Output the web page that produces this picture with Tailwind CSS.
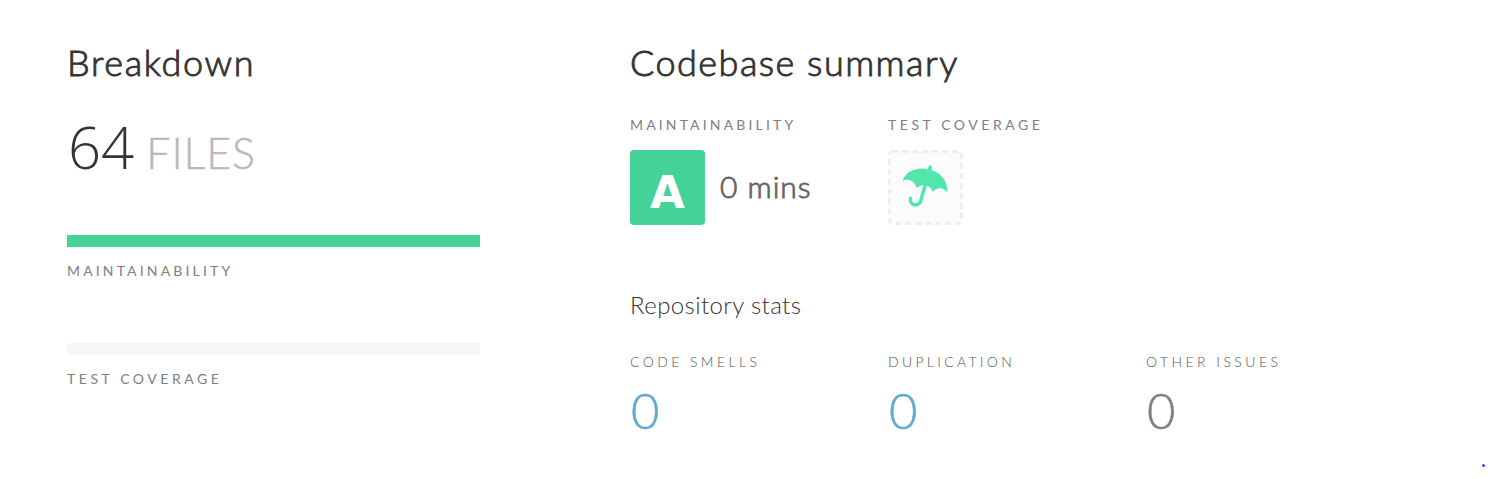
<!DOCTYPE html>
<html lang="en">
<head>
<meta charset="utf-8">
<title>Codebase summary</title>
<script src="https://cdn.jsdelivr.net/npm/@tailwindcss/browser@4"></script>
</head>
<body class="bg-white font-['Lato',sans-serif] text-[#333]">
<main class="relative flex h-[479px] w-[1488px] overflow-hidden pl-[67px] pt-[42px]">
  <section class="w-[413px]">
    <h2 class="h-10 whitespace-nowrap text-[36px] font-light leading-10 [-webkit-text-stroke:0.9px_#333]"><span class="tracking-[1.65px]">Breakdown</span></h2>
    <p class="mt-[35px] flex h-[60px] items-baseline whitespace-nowrap font-light leading-[60px]"><span class="pl-px font-['Open_Sans',sans-serif] text-[58px]">64</span><span class="ml-[12px] text-[43px] tracking-[0.9px] text-[#b8b8b8] [-webkit-text-stroke:0.4px_#b8b8b8]">FILES</span></p>
    <div class="mt-[58px] h-3 bg-[#45d298]"></div>
    <h3 class="mt-[14px] h-5 whitespace-nowrap text-[14px] leading-5 text-[#808080]"><span class="tracking-[3.15px]">MAINTAINABILITY</span></h3>
    <div class="mt-[62px] h-3 bg-[#f7f7f7]"></div>
    <h3 class="mt-[14px] h-5 whitespace-nowrap text-[14px] leading-5 text-[#808080]"><span class="tracking-[3.55px]">TEST COVERAGE</span></h3>
  </section>
  <section class="ml-[150px] w-[774px]">
    <h2 class="h-10 whitespace-nowrap text-[36px] font-light leading-10 [-webkit-text-stroke:0.9px_#333]"><span class="tracking-[1.48px]">Codebase summary</span></h2>
    <div class="mt-[33px] grid grid-cols-3">
      <div>
        <h3 class="h-5 whitespace-nowrap text-[14px] leading-5 text-[#808080]"><span class="tracking-[3.15px]">MAINTAINABILITY</span></h3>
        <div class="mt-[15px] flex h-[75px] items-center">
          <div class="flex h-[75px] w-[75px] items-center justify-center rounded-[4px] bg-[#45d298] pt-[10px] font-['DejaVu_Sans',sans-serif] text-[45px] font-bold leading-none text-white">A</div>
          <span class="ml-[15px] whitespace-nowrap pb-[3px] text-[30px] font-light leading-10 tracking-[1px] text-[#666] [-webkit-text-stroke:0.9px_#666]">0 mins</span>
        </div>
      </div>
      <div>
        <h3 class="h-5 whitespace-nowrap text-[14px] leading-5 text-[#808080]"><span class="tracking-[3.55px]">TEST COVERAGE</span></h3>
        <svg class="mt-[15px] block h-[75px] w-[75px]" viewBox="0 0 75 75" fill="none">
          <rect x="1.5" y="1.5" width="72" height="72" rx="3" fill="#fbfbfb" stroke="#eee" stroke-width="3" stroke-dasharray="6 3.9"/>
          <path d="M14.500 31C18 20 31 16.500 42 19.500C53 22.500 60 31 59.500 43C56 37 49 37 44.500 42C43.500 35 34 33 28.500 38C27 30 19 28 14.500 31Z" fill="#53e6ab"/>
          <path d="M42.300 17L41.500 20" stroke="#53e6ab" stroke-width="3.500" stroke-linecap="round"/>
          <path d="M37 35.500L33 50C31 58 21 55.500 22.500 48.500" stroke="#53e6ab" stroke-width="3.500" stroke-linecap="round"/>
        </svg>
      </div>
    </div>
    <h2 class="mt-[65px] h-[30px] whitespace-nowrap text-[24px] font-light leading-[30px]"><span class="tracking-[0.4px]">Repository stats</span></h2>
    <div class="mt-8 grid grid-cols-3 font-light">
      <div>
        <h3 class="h-5 whitespace-nowrap text-[14px] leading-5 text-[#555]"><span class="tracking-[3.4px]">CODE SMELLS</span></h3>
        <p class="mt-2 pl-px text-[49px] leading-[60px] text-[#60a9d3] [-webkit-text-stroke:0.5px_#60a9d3]">0</p>
      </div>
      <div>
        <h3 class="h-5 whitespace-nowrap text-[14px] leading-5 text-[#555]"><span class="tracking-[3.3px]">DUPLICATION</span></h3>
        <p class="mt-2 pl-px text-[49px] leading-[60px] text-[#60a9d3] [-webkit-text-stroke:0.5px_#60a9d3]">0</p>
      </div>
      <div>
        <h3 class="h-5 whitespace-nowrap text-[14px] leading-5 text-[#555]"><span class="tracking-[3.45px]">OTHER ISSUES</span></h3>
        <p class="mt-2 pl-px text-[49px] leading-[60px] text-[#808080] [-webkit-text-stroke:0.5px_#808080]">0</p>
      </div>
    </div>
  </section>
  <span class="absolute left-[1482px] top-[464px] h-[3px] w-[3px] rounded-full bg-[#4040ff]"></span>
</main>
</body>
</html>
